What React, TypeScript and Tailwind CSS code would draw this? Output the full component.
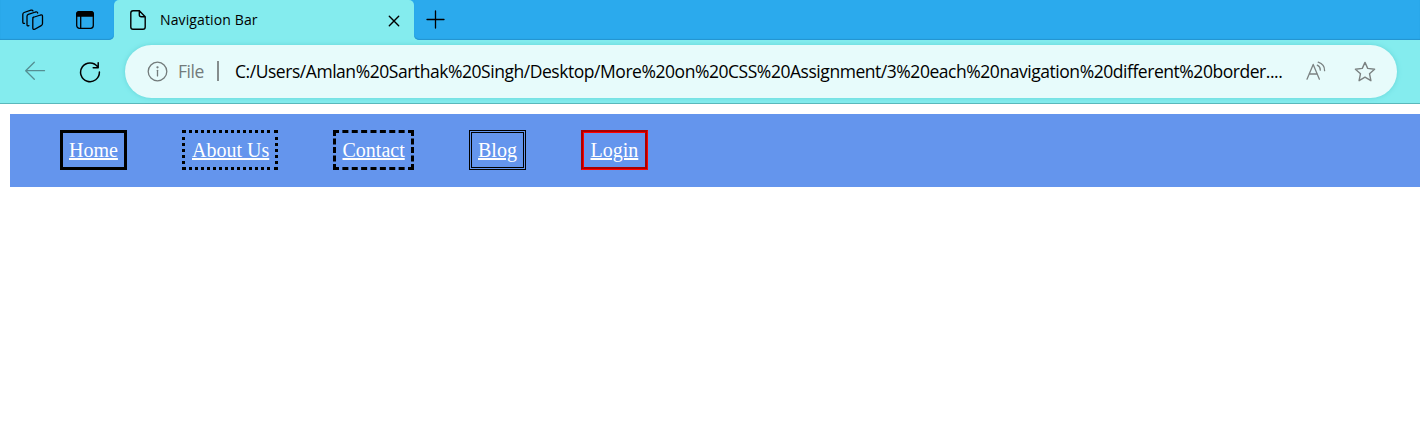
import React from "react";

const links = [
  { label: "Home", box: "w-[67px] pl-[6px] border-solid border-black" },
  { label: "About Us", box: "w-[96px] pl-[7px] border-dotted border-black" },
  { label: "Contact", box: "w-[81px] pl-[6.5px] border-dashed border-black" },
  { label: "Blog", box: "w-[57px] pl-[6px] border-double border-black" },
  { label: "Login", box: "w-[67px] pl-[6.5px] [border-style:groove] border-[#ff0000]" },
];

const stroke = { fill: "none", stroke: "currentColor", strokeLinecap: "round", strokeLinejoin: "round" } as const;

function TabStrip() {
  return (
    <div className="flex h-10 bg-[#84ecee] text-black">
      <div className="flex h-10 w-[114px] items-start rounded-br-[5px] bg-[#2baaed] pl-[22px] pt-[9px] shadow-[inset_0_-1px_1px_#2494cf]">
        <svg width="22" height="22" viewBox="0 0 22 22" strokeWidth="1.3" {...stroke}>
          <path d="M10.8 8.5 18.6 6q1.9-.5 1.9 1.4v7.2q0 1.5-1.3 2l-6.4 3.6q-2 .8-2-1.2V9.8q0-1.1 1-1.6Z" />
          <path d="M6.9 16.6q-1.9.8-1.9-1.2V7.3q0-1.4 1.3-1.9L13.5 3q1.8-.5 2.2 1" />
          <path d="M2.5 14.4Q.8 14.7.8 12.9V5.4q0-1.4 1.3-1.9L9 1.2q1.5-.4 2 .7" />
        </svg>
        <svg className="ml-[32px] mt-[2px]" width="18" height="18" viewBox="0 0 18 18" strokeWidth="1.3" {...stroke}>
          <rect x=".7" y=".7" width="16.6" height="16.6" rx="2.7" />
          <path d="M4.7 5v12" />
          <path d="M.7 5V3.2Q.7.7 3.2.7h11.6q2.5 0 2.5 2.5V5Z" fill="currentColor" />
        </svg>
      </div>
      <div className="flex h-10 w-[300px] bg-[linear-gradient(#2baaed_0_20px,#84ecee_20px)]">
        <div className="flex h-10 w-[300px] items-center rounded-t-[5px] bg-[#84ecee] pl-4">
          <svg width="16" height="20" viewBox="0 0 16 20" strokeWidth="1.4" {...stroke}>
            <path d="M9.3.8H3Q.8.8.8 3v14Q.8 19.2 3 19.2h10q2.2 0 2.2-2.2V6.8L9.3.8v4Q9.3 6.8 11.3 6.8h3.9" />
          </svg>
          <span className="ml-[14px] w-[100px] whitespace-nowrap font-['Open_Sans',sans-serif] text-[14px] leading-5 tracking-[0.12px]">Navigation Bar</span>
          <svg className="ml-[128px] mt-[1px]" width="12" height="12" viewBox="0 0 12 12" strokeWidth="1.4" {...stroke}>
            <path d="m1.3 1.3 9.4 9.4m0-9.4-9.4 9.4" />
          </svg>
        </div>
      </div>
      <div className="flex h-10 flex-1 items-start rounded-bl-[5px] bg-[#2baaed] pl-[12px] pt-[10px] shadow-[inset_0_-1px_1px_#2494cf]">
        <svg width="19" height="19" viewBox="0 0 19 19" strokeWidth="1.3" {...stroke}>
          <path d="M9.5 1v17M1 9.5h17" />
        </svg>
      </div>
    </div>
  );
}

function Toolbar() {
  return (
    <div className="flex h-16 border-b border-[#5ab8bb] bg-[#84ecee] pt-[5px]">
      <div className="flex h-[53px] w-[125px] items-center pl-[24px]">
        <svg className="-mt-[2px] text-[#548e92]" width="22" height="20" viewBox="0 0 22 20" strokeWidth="1.3" {...stroke}>
          <path d="M20.5 9.7H1.7M10.3 1.2 1.7 9.7l8.6 8.6" />
        </svg>
        <svg className="ml-[33px]" width="22" height="22" viewBox="0 0 22 22" strokeWidth="1.5" {...stroke}>
          <path d="M18.7 5.9A9.4 9.4 0 1 0 20.4 11M19.2 1.7v5h-5" />
        </svg>
      </div>
      <div className="flex h-[53px] w-[1272px] items-center rounded-full bg-[#e7fbfb] pl-[22px] font-['Open_Sans',sans-serif] text-[17.5px] shadow-[0_0_5px_#65d5d8]">
        <svg className="text-[#737b7b]" width="21" height="21" viewBox="0 0 21 21" strokeWidth="1.3" {...stroke}>
          <circle cx="10.5" cy="10.5" r="9.3" />
          <path d="M10.5 9.3v5.6" />
          <circle cx="10.5" cy="6.3" r=".5" fill="currentColor" />
        </svg>
        <span className="mb-[1px] ml-[10px] w-[39px] leading-6 tracking-[-0.45px] text-[#737b7b]">File</span>
        <span className="mb-[1px] h-5 w-[2px] bg-[#858d8d]" />
        <span className="mb-[1px] ml-[16px] w-[1050px] shrink-0 whitespace-nowrap leading-6 tracking-[-0.455px] text-black">
          C:/Users/Amlan%20Sarthak%20Singh/Desktop/More%20on%20CSS%20Assignment/3%20each%20navigation%20different%20border....
        </span>
        <svg className="-mt-[2px] ml-[21px] shrink-0 text-[#7b8282]" width="20" height="20" viewBox="0 0 20 20" strokeWidth="1.3" {...stroke}>
          <path d="M1 18.2 7.2 3.4l6.2 14.8M3.1 13h8.2M11.3 4.2q3.1 1.5 3 5M12.2 1.2q6.6 2.1 6.4 8.5" />
        </svg>
        <svg className="ml-[28px] shrink-0 text-[#7b8282]" width="22" height="22" viewBox="0 0 22 22" strokeWidth="1.4" {...stroke}>
          <path d="m11 1.4 2.7 6 6.9.8-5.1 4.5 1.4 7L11 16.2l-5.9 3.5 1.4-7-5.1-4.5 6.9-.8Z" />
        </svg>
      </div>
    </div>
  );
}

export default function App() {
  return (
    <div className="h-[426px] w-[1420px] overflow-hidden bg-white">
      <TabStrip />
      <Toolbar />
      <nav className="ml-[10px] mt-[10px] flex h-[73px] gap-[55px] bg-[#6495ed] pl-[50px] pt-4 font-['Liberation_Serif',serif] text-[20px]">
        {links.map(({ label, box }) => (
          <a key={label} href="#" className={`${box} h-10 whitespace-nowrap border-[3px] pt-[6px] leading-[23px] text-white underline decoration-2 underline-offset-1`}>
            {label}
          </a>
        ))}
      </nav>
    </div>
  );
}
